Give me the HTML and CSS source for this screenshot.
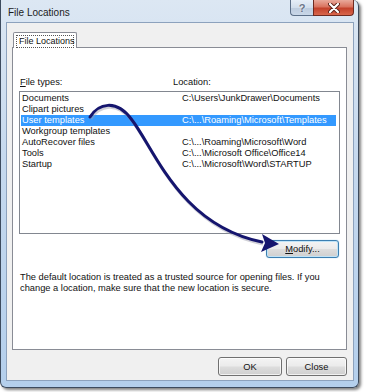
FILE: index.html
```html
<!DOCTYPE html>
<html lang="en">
<head>
  <meta charset="UTF-8" />
  <title>File Locations</title>
  <link rel="stylesheet" href="styles.css">
</head>
<body>
  <div class="window">
    <div class="titlebar">
      <span class="title">File Locations</span>
      <div class="caption-buttons">
        <span class="cap-btn help">?</span>
        <span class="cap-btn close">
          <svg width="12" height="10" viewBox="0 0 12 10">
            <path d="M2 1 L10 9 M10 1 L2 9" stroke="#5a2018" stroke-width="4" stroke-linecap="round"/>
            <path d="M2 1 L10 9 M10 1 L2 9" stroke="#ffffff" stroke-width="2.2" stroke-linecap="round"/>
          </svg>
        </span>
      </div>
    </div>

    <div class="client">
      <div class="tabs">
        <span class="tab"><span class="focus">File Locations</span></span>
      </div>

      <div class="panel">
        <div class="col-labels">
          <span class="col-type"><u>F</u>ile types:</span>
          <span>Location:</span>
        </div>
        <div class="listbox">
          <div class="row"><span class="type">Documents</span><span>C:\Users\JunkDrawer\Documents</span></div>
          <div class="row"><span class="type">Clipart pictures</span><span></span></div>
          <div class="row selected"><span class="type">User templates</span><span>C:\...\Roaming\Microsoft\Templates</span></div>
          <div class="row"><span class="type">Workgroup templates</span><span></span></div>
          <div class="row"><span class="type">AutoRecover files</span><span>C:\...\Roaming\Microsoft\Word</span></div>
          <div class="row"><span class="type">Tools</span><span>C:\...\Microsoft Office\Office14</span></div>
          <div class="row"><span class="type">Startup</span><span>C:\...\Microsoft\Word\STARTUP</span></div>
        </div>
        <div class="modify-row">
          <button class="btn modify"><u>M</u>odify...</button>
        </div>
        <p class="note">The default location is treated as a trusted source for opening files. If you change a location, make sure that the new location is secure.</p>
      </div>

      <div class="buttons">
        <button class="btn ok">OK</button>
        <button class="btn close-btn">Close</button>
      </div>
    </div>
  </div>

  <svg class="arrow" width="365" height="392" viewBox="0 0 365 392">
    <path d="M91,119 C99,106 117,100 133,122 C156,152 181,227 263,244" fill="none" stroke="#9a9aa8" stroke-width="3" opacity="0.45"/>
    <path d="M90,117 C98,104 116,98 132,120 C155,150 180,225 262,242" fill="none" stroke="#15156e" stroke-width="3" stroke-linecap="round"/>
    <polygon points="279,244 262,234 265,243 261,252" fill="#15156e"/>
  </svg>
</body>
</html>
```

FILE: styles.css
```css
body {
  margin: 0;
  background: #ffffff;
  font-family: "Liberation Sans", Arial, sans-serif;
  position: relative;
  width: 365px;
  height: 392px;
}
.window {
  width: 359px;
  height: 388px;
  box-sizing: border-box;
  border: 1px solid #3d4b5e;
  border-top: none;
  border-radius: 0 6px 6px 6px;
  padding: 0 4px 6px 5px;
  background: linear-gradient(to bottom, #dce7f3 0%, #c6d9ee 40%, #b4cfec 100%);
  box-shadow: 2px 2px 3px rgba(0, 0, 0, 0.5);
  display: flex;
  flex-direction: column;
}
.titlebar {
  height: 22px;
  display: flex;
  justify-content: space-between;
  align-items: flex-start;
}
.title {
  font-size: 10px;
  color: #1b1b1b;
  margin: 7px 0 0 2px;
}
.caption-buttons {
  display: flex;
}
.cap-btn {
  height: 16px;
  display: flex;
  align-items: center;
  justify-content: center;
  box-sizing: border-box;
  border: 1px solid #5c6f88;
  border-top: none;
}
.help {
  width: 23px;
  border-radius: 0 0 0 4px;
  border-right: none;
  background: linear-gradient(to bottom, #e6eef7 0%, #d2deec 50%, #bccbdd 51%, #c9d7e8 100%);
  color: #6a7588;
  font-size: 11px;
  font-weight: bold;
  text-shadow: 0 0 2px #ffffff;
}
.close {
  width: 41px;
  border-radius: 0 0 4px 0;
  border-color: #6e2a20;
  background: linear-gradient(to bottom, #e9a99b 0%, #d9735f 45%, #c3412b 55%, #d8664c 100%);
}
.client {
  flex: 1;
  background: #f0f0f0;
  border: 1px solid #8da2bd;
  padding: 9px 6px 4px 5px;
  display: flex;
  flex-direction: column;
  font-size: 9.3px;
  color: #111111;
}
.tabs {
  display: flex;
  padding-left: 1px;
  height: 15px;
  position: relative;
  z-index: 1;
}
.tab {
  width: 64px;
  height: 16px;
  box-sizing: border-box;
  background: #ffffff;
  border: 1px solid #898c95;
  border-bottom: none;
  border-radius: 2px 2px 0 0;
  padding: 2px 2px 0 2px;
}
.focus {
  display: block;
  border: 1px dotted #555555;
  font-size: 9px;
  line-height: 11px;
  padding-left: 2px;
  white-space: nowrap;
}
.panel {
  height: 303px;
  box-sizing: border-box;
  background: #ffffff;
  border: 1px solid #898c95;
  padding: 29px 6px 0 6px;
  display: flex;
  flex-direction: column;
}
.col-labels {
  display: flex;
  line-height: 11px;
  padding-left: 1px;
}
.col-type {
  width: 153px;
}
.listbox {
  margin-top: 3px;
  height: 143px;
  box-sizing: border-box;
  border: 1px solid #828790;
  padding: 1px 3px 1px 1px;
}
.row {
  display: flex;
  height: 11px;
  line-height: 11px;
  padding-left: 1px;
}
.row .type {
  width: 160px;
}
.row.selected {
  background: #3399ff;
  color: #ffffff;
}
.modify-row {
  display: flex;
  justify-content: flex-end;
  padding-right: 1px;
  margin-top: 6px;
}
.btn {
  font-family: "Liberation Sans", Arial, sans-serif;
  font-size: 9.3px;
  color: #111111;
  height: 19px;
  padding: 0;
  border: 1px solid #707070;
  border-radius: 3px;
  background: linear-gradient(to bottom, #f4f4f4 0%, #ebebeb 48%, #dddddd 52%, #cfcfcf 100%);
  box-shadow: inset 0 0 0 1px rgba(255, 255, 255, 0.7);
}
.modify {
  width: 73px;
  height: 18px;
  border-color: #3c7fb1;
  box-shadow: inset 0 0 0 1px #bfe3f7, 0 0 1px #6fb2e0;
}
.note {
  margin: 14px 0 0 1px;
  line-height: 11px;
}
.buttons {
  display: flex;
  justify-content: flex-end;
  gap: 4px;
  margin-top: 7px;
}
.ok {
  width: 64px;
}
.close-btn {
  width: 61px;
}
.arrow {
  position: absolute;
  left: 0;
  top: 0;
  pointer-events: none;
}
```
